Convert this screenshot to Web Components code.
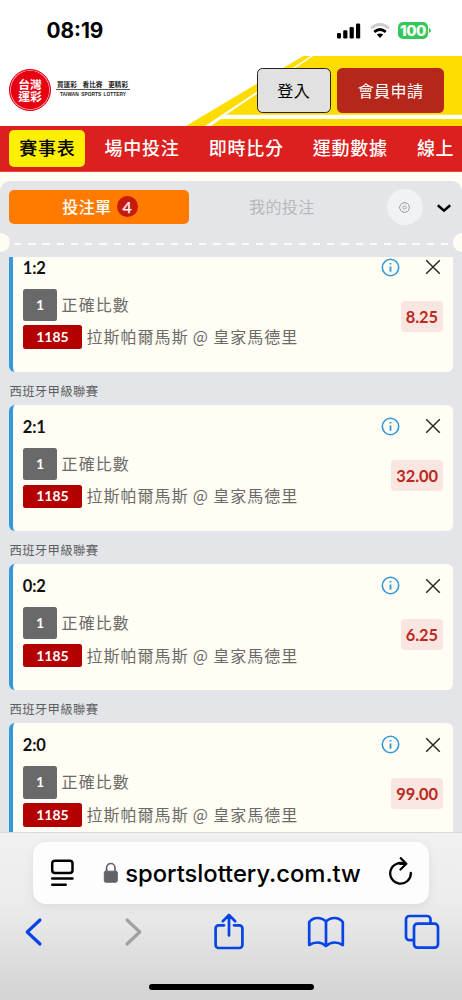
<!DOCTYPE html>
<html lang="zh-Hant">
<head>
<meta charset="utf-8">
<title>台灣運彩</title>
<style>
html,body{margin:0;padding:0;height:1000px;overflow:hidden;background:#fff}
body{font-family:Lato,"Noto Sans CJK TC",sans-serif}
</style>
</head>
<body>
<lottery-app></lottery-app>
<script>
const define = (name, html) => {
  const t = document.createElement('template');
  t.innerHTML = html;
  customElements.define(name, class extends HTMLElement {
    constructor() {
      super();
      this.attachShadow({mode: 'open'}).appendChild(t.content.cloneNode(true));
    }
  });
};

define('status-bar', `<style>
:host{display:flex;height:56px;box-sizing:border-box;padding:5.5px 31px 0 46.4px;align-items:center;justify-content:space-between;background:#fff;font:700 20.8px Inter,sans-serif}
.r{display:flex;align-items:center;gap:9px}
svg{display:block}
.bat{width:30px;height:17px;border-radius:5px;background:#34c759;color:#fff;font:800 15px/17px Inter,sans-serif;text-align:center;letter-spacing:-.4px}
.wrap{display:flex;align-items:center;gap:1px;margin-left:-1px}
</style>
<span>08:19</span>
<div class="r">
<svg width="24" height="16" viewBox="0 0 24 16"><rect x="0" y="10" width="4" height="5.5" rx="1.3"/><rect x="6.2" y="7.3" width="4.2" height="8.2" rx="1.3"/><rect x="12.6" y="4" width="4.2" height="11.5" rx="1.3"/><rect x="19" y="0.5" width="4.2" height="15" rx="1.3"/></svg>
<svg width="20" height="16" viewBox="0 0 20 16"><path d="M1 5.3Q10 -2.4 19 5.3" fill="none" stroke="#ccc" stroke-width="2.8"/><path d="M4.3 8.9Q10 4 15.7 8.9" fill="none" stroke="#000" stroke-width="2.8"/><path d="M6.8 11.6Q10 9.2 13.2 11.6L10 15z"/></svg>
<div class="wrap"><div class="bat">100</div><svg width="2" height="5"><path d="M0 0Q2 .7 2 2.5T0 5z" fill="#34c759"/></svg></div>
</div>`);

define('brand-logo', `<style>
:host{display:flex;gap:5px;color:#222}
.c{width:42px;height:42px;border-radius:50%;background:#e60012;box-sizing:border-box;border:1px solid #e60012;box-shadow:inset 0 0 0 .8px #ffb3b9;color:#fff;font:700 11.8px/12px "Noto Sans CJK TC",sans-serif;text-align:center;padding-top:7.5px}
.c span{display:block;height:12px}
.t{width:74px;padding-top:10.5px;text-align:center}
.a{font:700 6.6px/8px "Noto Sans CJK TC",sans-serif;white-space:pre;height:9px;display:flex;justify-content:space-between;padding:0 2px 0 1px}
.b{border-top:1px solid #555;font:700 4.8px/8px "Liberation Sans",sans-serif;padding-top:1px;letter-spacing:.05px;word-spacing:1px;white-space:nowrap}
</style><div class="c"><span>台灣</span><span>運彩</span></div><div class="t"><div class="a"><span>買運彩</span><span>看比賽</span><span>更精彩</span></div><div class="b">TAIWAN SPORTS LOTTERY</div></div>`);

define('app-button', `<style>
:host{display:flex;box-sizing:border-box;height:45px;align-items:center;justify-content:center;border-radius:5.5px;font:400 16px "Noto Sans CJK TC",sans-serif;letter-spacing:.4px;padding-bottom:2px}
:host([kind=login]){width:74px;background:#e1e1e1;border:1px solid #222;color:#000}
:host([kind=join]){width:107px;background:#b5271b;color:#fff}
</style><slot></slot>`);

define('site-header', `<style>
:host{display:grid;height:69.5px;background:#fff}
:host>*{grid-area:1/1}
.row{display:flex;padding:12.4px 18px 0 9px;align-items:flex-start;z-index:1}
brand-logo{margin-right:auto;margin-top:1px}
app-button+app-button{margin-left:6.3px}
</style>
<svg width="462" height="70" viewBox="0 55.8 462 70"><path d="M186 125.8L303.3 55.8H462V125.8z" fill="#ffdc00"/><path d="M205 125.8L311 55.6H313.5L226 114.5H462V118.8H221L211 125.8z" fill="#fff"/></svg>
<div class="row"><brand-logo></brand-logo><app-button kind="login">登入</app-button><app-button kind="join">會員申請</app-button></div>`);

define('site-nav', `<style>
:host{display:flex;height:46px;box-sizing:border-box;border-bottom:.7px solid #e84a3c;background:#dc1f1f;padding:4.8px 0 0 9.3px;color:#fff;font:500 18px/35.4px "Noto Sans CJK TC",sans-serif;letter-spacing:.75px;overflow:hidden;white-space:nowrap}
b{font-weight:500;background:#fff000;color:#000;width:76px;height:36.5px;border-radius:5px;text-align:center;text-indent:.2px;margin-right:19.3px;flex:none}
span{margin-right:29.1px;flex:none}
</style><b>賽事表</b><span>場中投注</span><span>即時比分</span><span>運動數據</span><span>線上</span>`);

define('slip-head', `<style>
:host{display:block;height:76px;position:relative}
.row{display:flex;align-items:center;padding:8px 9px 0 9.3px;height:36px}
.on{width:179.5px;height:33.3px;border-radius:5px;background:#ff7b00;color:#fff;display:flex;align-items:center;justify-content:center;gap:5.5px;font:500 16px/20px "Noto Sans CJK TC",sans-serif;letter-spacing:.3px}
.on span{margin:-2px 0 0 2px}
.on i{font:400 16px/22px Lato,sans-serif;-webkit-text-stroke:.25px #fff;width:21px;height:21px;border-radius:50%;background:#c61a0c;text-align:center;letter-spacing:0}
.off{width:186px;text-align:center;color:#b6b8ba;font:400 16px/20px "Noto Sans CJK TC",sans-serif;letter-spacing:.4px;margin-top:-2px}
.g{width:36px;height:36px;border-radius:50%;background:#f1f2f4;margin-left:12px;display:grid;place-items:center}
.v{margin:2px 0 0 13px}
.line{position:absolute;left:14px;right:13px;top:61.8px;height:2.3px;background:repeating-linear-gradient(90deg,#fffdf3 0 7.3px,transparent 7.3px 14.23px)}
.n{position:absolute;top:52.3px;width:19px;height:19px;border-radius:50%;background:#fffdf3}
svg{display:block}
</style>
<div class="row"><div class="on"><span>投注單</span><i>4</i></div><div class="off">我的投注</div>
<div class="g"><svg width="11" height="11" viewBox="0 0 10 10" fill="none" stroke="#8f9396" stroke-width=".75"><path d="M4 .5h2l.4 1 1.1-.3 1.3 1.3-.3 1 1 .5v2l-1 .5.3 1-1.3 1.3-1.1-.3-.4 1H4l-.4-1-1.1.3-1.3-1.3.3-1-1-.5V4l1-.5-.3-1 1.3-1.3 1.1.3z"/><circle cx="5" cy="5" r="1.5"/></svg></div>
<svg class="v" width="16" height="10" viewBox="0 0 16 10"><path d="M1.8 2.2L8 7.6L14.2 2.2" fill="none" stroke="#000" stroke-width="2.5"/></svg></div>
<div class="line"></div><div class="n" style="left:-9.5px"></div><div class="n" style="right:-9.5px"></div>`);

define('bet-card', `<style>
:host{display:block;height:159.15px}
:host([continued]){height:126.25px}
:host([continued]) .lg{display:none}
.lg{height:32.9px;box-sizing:border-box;padding-top:9.5px;color:#5d5f61;font:400 12.4px/19px "Noto Sans CJK TC",sans-serif;letter-spacing:.35px}
.card{height:126.25px;box-sizing:border-box;background:#fffdf4;border-left:4px solid #3498db;border-radius:6px;padding:12px 9.5px 0 9.3px;display:flex;justify-content:space-between}
.l{display:flex;flex-direction:column;align-items:flex-start;color:#6b6b68}
.p{font:700 16.5px/20px Lato,sans-serif;color:#111;margin-bottom:11px;letter-spacing:-.1px}
.m{display:flex;align-items:center;font:400 16px/22px "Noto Sans CJK TC",sans-serif;letter-spacing:1.05px;word-spacing:-.5px;white-space:nowrap}
.t{margin-top:-2px}
.n,.id{color:#fff;font:700 14px/20px Lato,sans-serif;letter-spacing:0;border-radius:2.5px;display:grid;place-items:center}
.n{width:34.5px;height:32.3px;background:#696969;margin-right:4.4px}
.id{width:59.5px;height:23.7px;background:#b40000;margin-right:4.2px;letter-spacing:0}
.m+.m{margin-top:4.3px}
.r{display:flex;flex-direction:column;align-items:flex-end}
.i{display:flex;gap:25px;padding-right:1.8px;margin-bottom:24px;align-items:center}
.o{height:31px;padding:0 5px;background:#f9e6e0;border-radius:4px;color:#bb2a1e;font:700 16.4px/31px Lato,sans-serif}
svg{display:block}
</style>
<div class="lg"><slot name="league"></slot></div>
<div class="card"><div class="l"><div class="p"><slot name="pick"></slot></div><div class="m"><span class="n">1</span><span class="t">正確比數</span></div><div class="m"><span class="id">1185</span><span class="t">拉斯帕爾馬斯 @ 皇家馬德里</span></div></div>
<div class="r"><div class="i"><svg width="19" height="19" viewBox="0 0 19 19"><circle cx="9.5" cy="9.5" r="8.2" fill="none" stroke="#3498db" stroke-width="1.6"/><path d="M9.5 8.4v5.3M9.5 5v1.6" stroke="#3498db" stroke-width="1.8"/></svg><svg width="16" height="16" viewBox="0 0 16 16"><path d="M1.2 1.2L14.8 14.8M14.8 1.2L1.2 14.8" stroke="#222" stroke-width="1.4"/></svg></div><div class="o"><slot name="odds"></slot></div></div></div>`);

define('bet-slip', `<style>
:host{display:flex;flex-direction:column;height:660.5px;background:#fffdf4;padding-top:9.5px;box-sizing:border-box}
.p{background:#e3e5e8;border-radius:10px 10px 0 0;flex:1;min-height:0;display:flex;flex-direction:column;overflow:hidden}
slip-head{flex:none}
.list{flex:1;min-height:0;overflow:hidden;padding:0 9.4px 0 9.4px}
bet-card:first-child{margin-top:-11.2px}
</style><div class="p"><slip-head></slip-head><div class="list">
${[['1:2','8.25'],['2:1','32.00'],['0:2','6.25'],['2:0','99.00']].map(([p,o],n)=>`<bet-card${n?'':' continued'}>${n?'<span slot="league">西班牙甲級聯賽</span>':''}<span slot="pick">${p}</span><span slot="odds">${o}</span></bet-card>`).join('')}
</div></div>`);

define('browser-bar', `<style>
:host{display:block;height:168px;box-sizing:border-box;border-top:1px solid #d9d9d9;background:linear-gradient(#f1f1f2 0,#ececed 70px,#d8d7d8 150px,#d6d5d6);padding:9px 33px 0 33.3px}
.u{height:62px;border-radius:13px;background:#fdfdfd;box-shadow:0 3px 12px rgba(0,0,0,.07);display:flex;align-items:center;padding:0 16px 0 17px}
.u span{font:550 23.8px/30px Inter,sans-serif;letter-spacing:-.03px;margin:1px auto 0 6px;white-space:nowrap}
.k{display:flex;height:56px;align-items:center;margin:0 -10px 0 -9px;color:#0544e5}
.h{width:165px;height:6px;border-radius:3px;background:#000;margin:23.5px auto 0}
svg{display:block;fill:none;stroke:currentColor;stroke-linecap:round;stroke-linejoin:round;flex:none}
</style>
<div class="u">
<svg width="25" height="28" viewBox="0 0 25 28" stroke-width="2.5"><rect x="2.2" y="1.7" width="20.3" height="12.2" rx="2.7"/><path d="M2.2 19.6H22.5M2.2 25.7H15.7"/></svg>
<svg style="margin-left:28px" width="16" height="22" viewBox="0 0 16 22" color="#636268"><rect x="1.3" y="9.2" width="13" height="11" rx="1.4" fill="#636268"/><path d="M3.6 9V5.7a4.2 4.2 0 0 1 8.4 0V9" stroke-width="1.7"/></svg>
<span>sportslottery.com.tw</span>
<svg style="margin-top:-3px" width="25" height="29" viewBox="0 0 25 29" stroke-width="2.3"><path d="M22.8 16A10.3 10.3 0 1 1 17 7.1M12.8 1.2L18.3 6.8L12.5 12.5M17.7 6.8H12"/></svg>
</div>
<div class="k">
<svg width="19" height="30" viewBox="0 0 19 30" stroke-width="3.1"><path d="M16 3L3.2 15L16 27"/></svg>
<svg style="margin-left:80.7px" width="19" height="30" viewBox="0 0 19 30" stroke-width="3.1" color="#a0a0a1"><path d="M3 3L15.8 15L3 27"/></svg>
<svg style="margin:-1px 0 0 69.7px" width="32" height="38" viewBox="0 0 32 38" stroke-width="2.7"><path d="M11 12.3H5.6a3 3 0 0 0-3 3V32a3 3 0 0 0 3 3H26.4a3 3 0 0 0 3-3V15.3a3 3 0 0 0-3-3H21M16 22.5V2M9.8 8.2L16 2L22.2 8.2"/></svg>
<svg style="margin-left:62px" width="38" height="32" viewBox="0 0 38 32" stroke-width="2.7"><path d="M19 5.5Q15.5 2 10.5 2T2.2 6V29Q6 26.500 10.5 26.500T19 30Q23 26.500 27.5 26.500T35.800 29V6Q32.500 2 27.500 2T19 5.500V29"/></svg>
<svg style="margin-left:59.2px" width="36" height="36" viewBox="0 0 36 36" stroke-width="2.7"><path d="M9.5 26.2H5.5a3.5 3.5 0 0 1-3.5-3.5V5.5A3.5 3.5 0 0 1 5.5 2H23A3.5 3.5 0 0 1 26.5 5.5V9.5"/><rect x="10" y="9.7" width="24" height="24" rx="3.5"/></svg>
</div>
<div class="h"></div>`);

define('lottery-app', `<style>
:host{display:flex;flex-direction:column;width:462px;height:1000px;overflow:hidden}
:host>*{flex:none}
</style><status-bar></status-bar><site-header></site-header><site-nav></site-nav><bet-slip></bet-slip><browser-bar></browser-bar>`);
</script>
</body>
</html>
